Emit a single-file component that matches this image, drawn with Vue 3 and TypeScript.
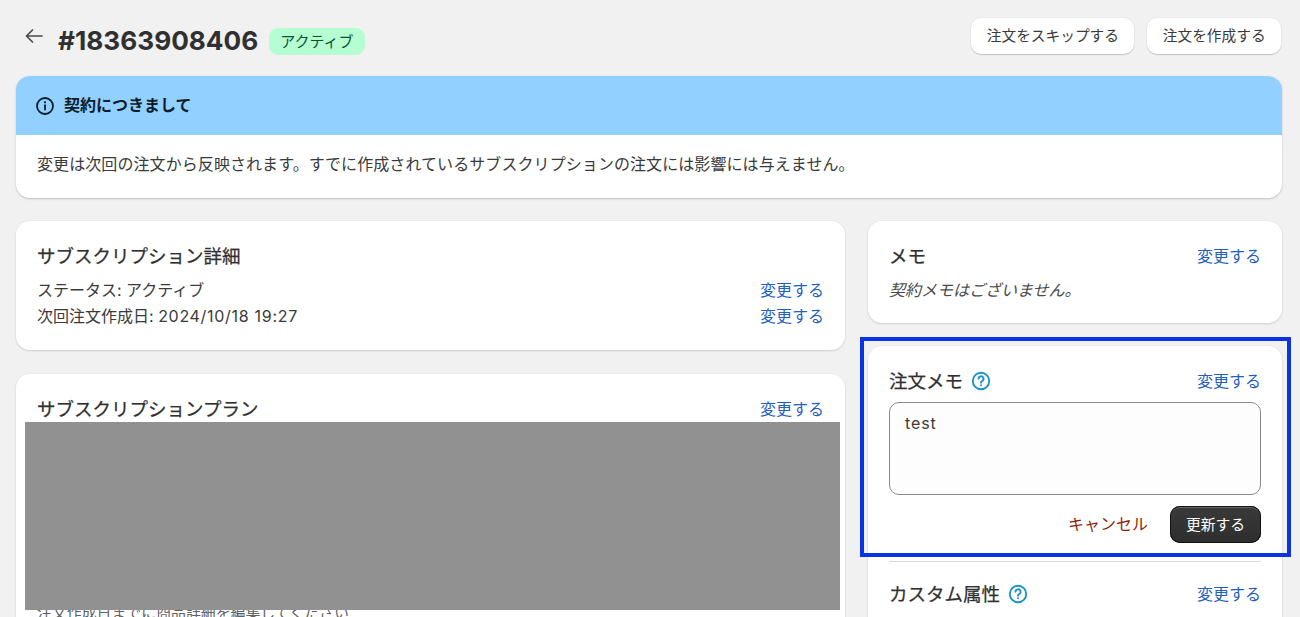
<script setup lang="ts">
const change = '変更する'
</script>

<template>
  <div class="page">
    <header class="top">
      <div class="top-left">
        <svg class="back" width="20" height="16" viewBox="0 0 20 16" fill="none" stroke="#4a4a4a" stroke-width="1.7" stroke-linecap="round" stroke-linejoin="round">
          <path d="M18 8H2.5M8.5 2 2.5 8l6 6" />
        </svg>
        <h1>#18363908406</h1>
        <span class="badge">アクティブ</span>
      </div>
      <div class="top-actions">
        <button class="btn">注文をスキップする</button>
        <button class="btn">注文を作成する</button>
      </div>
    </header>

    <section class="banner">
      <div class="banner-head">
        <svg width="20" height="20" viewBox="0 0 20 20" fill="none" stroke="#0b1c2a" stroke-width="1.8" stroke-linecap="round">
          <circle cx="10" cy="10" r="8" />
          <path d="M10 9.2v4.4" />
          <circle cx="10" cy="6.3" r="0.5" fill="#0b1c2a" stroke-width="1.2" />
        </svg>
        <strong>契約につきまして</strong>
      </div>
      <p class="banner-body">変更は次回の注文から反映されます。すでに作成されているサブスクリプションの注文には影響には与えません。</p>
    </section>

    <div class="columns">
      <main class="col">
        <section class="card detail">
          <h2>サブスクリプション詳細</h2>
          <div class="row row-first"><span>ステータス: アクティブ</span><a>{{ change }}</a></div>
          <div class="row"><span>次回注文作成日: <span class="latin">2024/10/18 19:27</span></span><a>{{ change }}</a></div>
        </section>
        <section class="card plan">
          <div class="row"><h2>サブスクリプションプラン</h2><a>{{ change }}</a></div>
          <p class="plan-note">注文作成日までに商品詳細を編集してください</p>
        </section>
      </main>

      <aside class="col aside">
        <section class="card memo">
          <div class="row"><h2>メモ</h2><a>{{ change }}</a></div>
          <p class="memo-empty">契約メモはございません。</p>
        </section>
        <section class="card attrs">
          <div class="row">
            <h2 class="help-title">注文メモ
              <svg class="help" width="20" height="20" viewBox="0 0 20 20" fill="none" stroke="#1b93c9" stroke-width="1.9" stroke-linecap="round">
                <circle cx="10" cy="10" r="8.2" />
                <path d="M7.5 7.8a2.5 2.5 0 1 1 3.7 2.2c-.8.45-1.2.9-1.2 1.7" />
                <circle cx="10" cy="14.2" r="0.4" fill="#1b93c9" stroke-width="1.1" />
              </svg>
            </h2>
            <a>{{ change }}</a>
          </div>
          <textarea class="note" readonly value="test"></textarea>
          <div class="form-actions">
            <a class="cancel">キャンセル</a>
            <button class="primary">更新する</button>
          </div>
          <hr />
          <div class="row">
            <h2 class="help-title">カスタム属性
              <svg class="help" width="20" height="20" viewBox="0 0 20 20" fill="none" stroke="#1b93c9" stroke-width="1.9" stroke-linecap="round">
                <circle cx="10" cy="10" r="8.2" />
                <path d="M7.5 7.8a2.5 2.5 0 1 1 3.7 2.2c-.8.45-1.2.9-1.2 1.7" />
                <circle cx="10" cy="14.2" r="0.4" fill="#1b93c9" stroke-width="1.1" />
              </svg>
            </h2>
            <a>{{ change }}</a>
          </div>
        </section>
      </aside>
    </div>

    <div class="redaction"></div>
    <div class="highlight"></div>
  </div>
</template>

<style>
html, body { margin: 0; background: #f1f1f1; }
</style>

<style scoped>
.page {
  position: relative;
  height: 617px;
  overflow: hidden;
  box-sizing: border-box;
  padding: 18px 18px 0 16px;
  background: #f1f1f1;
  color: #3a3a3a;
  font-family: Inter, "Noto Sans CJK JP", sans-serif;
  font-size: 16px;
  line-height: 26px;
}
.top { display: flex; justify-content: space-between; align-items: flex-start; height: 36px; margin-bottom: 22px; }
.top-left { display: flex; align-items: center; margin-top: 5px; }
.back { margin: -10px 14px 0 8px; }
h1 { margin: 0; font-size: 26.2px; line-height: 36px; font-weight: 700; color: #303030; }
.badge {
  margin-left: 11px;
  padding: 0 11px;
  height: 27px;
  line-height: 27px;
  border-radius: 9px;
  background: #b4fed2;
  color: #0c5132;
  font-size: 15px;
}
.top-actions { display: flex; gap: 13px; margin-right: 1px; }
.btn {
  height: 36px;
  padding: 0 15.4px;
  border: 0;
  border-radius: 10px;
  background: #fff;
  color: #3a3a3a;
  font: inherit;
  font-size: 14.7px;
  box-shadow: 0 1px 1px 0 #c4c4c4, 0 0 0 1px #ebebeb;
}
.banner {
  height: 122px;
  border-radius: 14px;
  overflow: hidden;
  background: #fff;
  box-shadow: 0 1px 2px 0 #bdbdbd;
  margin-bottom: 23px;
}
.banner-head {
  display: flex;
  align-items: center;
  gap: 9px;
  box-sizing: border-box;
  height: 59px;
  padding: 0 0 2px 19px;
  background: #91d0ff;
  color: #0b1c2a;
}
.banner-head svg { margin-top: 2px; }
.banner-head strong { font-weight: 700; }
.banner-body { margin: 0; padding: 16px 21px; letter-spacing: 0.08px; }
.columns { display: grid; grid-template-columns: 829px 414px; gap: 23px; }
.col { display: flex; flex-direction: column; gap: 24px; min-width: 0; }
.aside { gap: 23px; }
.card {
  background: #fff;
  border-radius: 14px;
  padding: 21px;
  box-sizing: border-box;
  box-shadow: 0 1px 2px 0 #cfcfcf, 0 0 0 1px #ececec;
}
h2 { margin: 0; font-size: 18.5px; line-height: 28px; font-weight: 400; color: #303030; -webkit-text-stroke: 0.25px #303030; }
.row { display: flex; justify-content: space-between; align-items: center; }
a { color: #1f5fbf; }
.latin { letter-spacing: 0.7px; }
.detail { height: 129px; }
.row-first { margin-top: 7px; }
.plan { height: 400px; }
.plan-note { margin: 177px 0 0; font-size: 14.9px; color: #616161; }
.memo { height: 102px; }
.memo-empty { margin: 7px 0 0; font-style: italic; color: #4a4a4a; }
.attrs { height: 400px; padding-top: 21px; }
.help-title { display: flex; align-items: center; gap: 8px; }
.note {
  display: block;
  box-sizing: border-box;
  width: 100%;
  height: 93px;
  margin-top: 7px;
  padding: 7px 15px;
  border: 1px solid #8a8a8a;
  border-radius: 10px;
  background: #fdfdfd;
  color: #3a3a3a;
  font: inherit;
  letter-spacing: 0.9px;
  resize: none;
  outline: none;
}
.form-actions { display: flex; justify-content: flex-end; align-items: center; gap: 22px; margin-top: 11px; }
.cancel { color: #8e1f0b; margin-bottom: 2px; }
.primary {
  width: 91px;
  height: 37px;
  border: 0;
  border-radius: 10px;
  background: linear-gradient(#3a3a3a, #2e2e2e);
  color: #fff;
  font: inherit;
  font-size: 14.8px;
  box-shadow: inset 0 0 0 1px #111, inset 0 2px 0 #666;
}
hr { border: 0; border-top: 1px solid #d8d8d8; margin: 18px 0 18px; }
.redaction { position: absolute; left: 25px; top: 422px; width: 815px; height: 188px; background: #919191; }
.highlight {
  position: absolute;
  left: 860px;
  top: 337px;
  width: 431px;
  height: 220px;
  box-sizing: border-box;
  border: 4px solid #0a33e6;
}
</style>
